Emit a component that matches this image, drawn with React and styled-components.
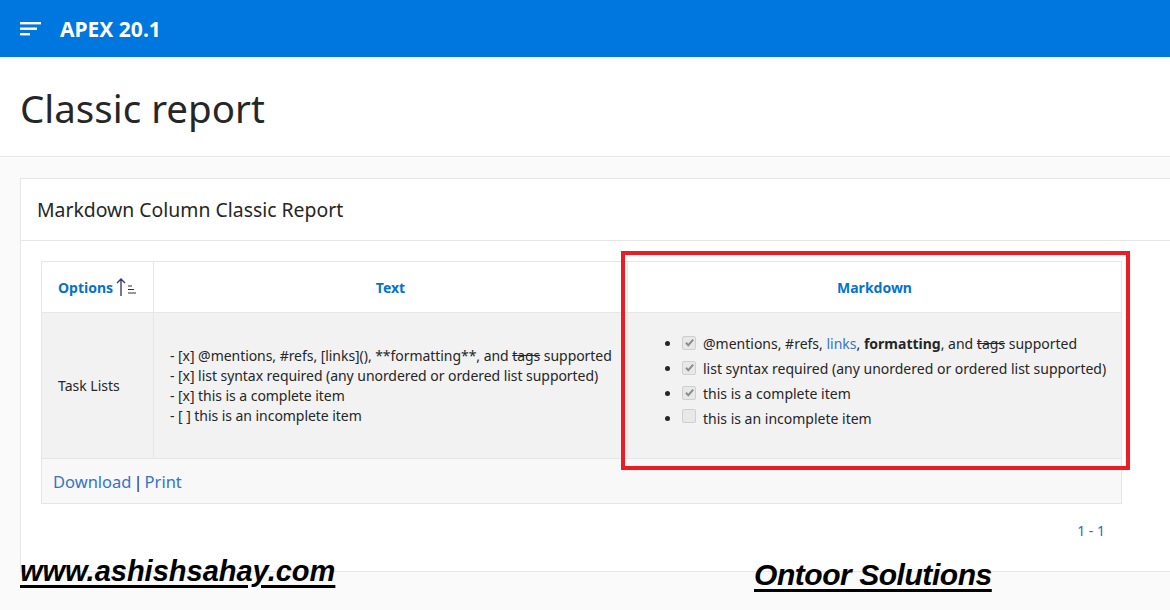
import styled, { createGlobalStyle } from "styled-components";

const GlobalStyle = createGlobalStyle`
  html, body {
    margin: 0;
    padding: 0;
    background: #fafafa;
    overflow: hidden;
  }
  body {
    font-family: "Noto Sans", "Open Sans", sans-serif;
    color: #262626;
  }
`;

const tasks = [
  { done: true, rich: true },
  { done: true, text: "list syntax required (any unordered or ordered list supported)" },
  { done: true, text: "this is a complete item" },
  { done: false, text: "this is an incomplete item" },
];

const rawLines = [
  <>- [x] @mentions, #refs, [links](), **formatting**, and <s>tags</s> supported</>,
  "- [x] list syntax required (any unordered or ordered list supported)",
  "- [x] this is a complete item",
  "- [ ] this is an incomplete item",
];

const MenuIcon = () => (
  <svg width="21" height="16" viewBox="0 0 21 16">
    <rect x="0" y="1" width="21" height="2.4" fill="#fff" />
    <rect x="0" y="6.5" width="17" height="2.4" fill="#fff" />
    <rect x="0" y="12" width="10" height="2.4" fill="#fff" />
  </svg>
);

const SortIcon = () => (
  <svg width="22" height="20" viewBox="0 0 22 20">
    <path d="M6 19V2M2 6l4-4 4 4" stroke="#3b3b6b" strokeWidth="1.4" fill="none" />
    <path d="M13 9h4M13 12.5h6M13 16h8" stroke="#333" strokeWidth="1.2" />
  </svg>
);

const Check = ({ on }) => (
  <CheckBox>
    {on && (
      <svg width="11" height="11" viewBox="0 0 11 11">
        <path d="M2 5.8l2.3 2.4L9.2 2.6" stroke="#8d8d8d" strokeWidth="2" fill="none" />
      </svg>
    )}
  </CheckBox>
);

const App = () => {
  return (
    <Page>
      <GlobalStyle />
      <TopBar>
        <MenuIcon />
        <AppName>APEX 20.1</AppName>
      </TopBar>
      <TitleBar>
        <PageTitle>Classic report</PageTitle>
      </TitleBar>
      <Body>
        <Card>
          <CardHeader>Markdown Column Classic Report</CardHeader>
          <CardBody>
            <Report>
              <colgroup>
                <col style={{ width: 112 }} />
                <col style={{ width: 474 }} />
                <col style={{ width: 494 }} />
              </colgroup>
              <thead>
                <tr>
                  <HeadCell>
                    <HeadInner>
                      Options <SortIcon />
                    </HeadInner>
                  </HeadCell>
                  <HeadCell>Text</HeadCell>
                  <HeadCell>Markdown</HeadCell>
                </tr>
              </thead>
              <tbody>
                <tr>
                  <DataCell>Task Lists</DataCell>
                  <DataCell>
                    {rawLines.map((l, i) => (
                      <RawLine key={i}>{l}</RawLine>
                    ))}
                  </DataCell>
                  <DataCell>
                    <TaskList>
                      {tasks.map((t, i) => (
                        <TaskItem key={i}>
                          <Check on={t.done} />
                          {t.rich ? (
                            <span>
                              @mentions, #refs, <InlineLink>links</InlineLink>,{" "}
                              <b>formatting</b>, and <s>tags</s> supported
                            </span>
                          ) : (
                            <span>{t.text}</span>
                          )}
                        </TaskItem>
                      ))}
                    </TaskList>
                  </DataCell>
                </tr>
                <tr>
                  <FooterCell colSpan={3}>
                    <FooterLink>Download</FooterLink>
                    <Divider>|</Divider>
                    <FooterLink>Print</FooterLink>
                  </FooterCell>
                </tr>
              </tbody>
            </Report>
            <Pagination>1 - 1</Pagination>
          </CardBody>
        </Card>
      </Body>
      <Highlight />
      <Watermark $left={20} $top={555} $size={29} $ls={0}>
        www.ashishsahay.com
      </Watermark>
      <Watermark $left={754} $top={558} $size={30} $ls={-0.45}>
        Ontoor Solutions
      </Watermark>
    </Page>
  );
};

const Page = styled.div`
  position: relative;
  width: 1170px;
  height: 610px;
  overflow: hidden;
  background: #fafafa;
`;

const TopBar = styled.header`
  height: 57px;
  background: #0076df;
  display: flex;
  align-items: center;
  gap: 19px;
  padding-left: 20px;
  box-sizing: border-box;
`;

const AppName = styled.span`
  color: #fff;
  font-size: 21px;
  font-weight: 700;
`;

const TitleBar = styled.div`
  height: 100px;
  background: #fff;
  border-bottom: 1px solid #e6e6e6;
  display: flex;
  align-items: center;
  padding-left: 20px;
  box-sizing: border-box;
`;

const PageTitle = styled.h1`
  margin: 0;
  font-size: 38.5px;
  font-weight: 400;
  color: #262626;
  padding-top: 3px;
`;

const Body = styled.main`
  padding: 21px 0 0 20px;
`;

const Card = styled.section`
  width: 1180px;
  height: 394px;
  background: #fff;
  border: 1px solid #e6e6e6;
  box-sizing: border-box;
`;

const CardHeader = styled.h2`
  margin: 0;
  height: 61px;
  display: flex;
  align-items: center;
  padding-left: 16px;
  font-size: 19.4px;
  font-weight: 400;
  color: #262626;
  border-bottom: 1px solid #e6e6e6;
`;

const CardBody = styled.div`
  padding: 20px 20px 0 20px;
  width: 1080px;
`;

const Report = styled.table`
  width: 1080px;
  table-layout: fixed;
  border-collapse: collapse;
  border: 1px solid #e6e6e6;
  font-size: 14px;
`;

const HeadCell = styled.th`
  height: 50px;
  padding: 0 10px;
  background: #fff;
  color: #0572ce;
  font-weight: 700;
  font-size: 14px;
  text-align: center;
  border: 1px solid #e6e6e6;
`;

const HeadInner = styled.span`
  display: inline-flex;
  align-items: center;
  gap: 2px;
`;

const DataCell = styled.td`
  height: 145px;
  padding: 0 16px;
  background: #f2f2f2;
  border: 1px solid #e6e6e6;
  vertical-align: middle;
  color: #262626;
`;

const RawLine = styled.div`
  line-height: 20px;
  white-space: nowrap;
  letter-spacing: -0.05px;
`;

const TaskList = styled.ul`
  margin: 0;
  padding: 0 0 9px 38px;
`;

const TaskItem = styled.li`
  line-height: 25px;
  white-space: nowrap;
  & > span:last-child {
    margin-left: 7px;
  }
`;

const CheckBox = styled.span`
  display: inline-flex;
  align-items: center;
  justify-content: center;
  width: 12px;
  height: 12px;
  border: 1px solid #cfcfcf;
  border-radius: 2px;
  background: #e8e8e8;
  vertical-align: 1px;
`;

const InlineLink = styled.span`
  color: #3873c8;
`;

const FooterCell = styled.td`
  height: 44px;
  padding: 0 11px;
  background: #f8f8f8;
  border: 1px solid #e6e6e6;
  font-size: 16.5px;
  color: #262b55;
`;

const FooterLink = styled.span`
  color: #3673c9;
`;

const Divider = styled.span`
  margin: 0 2px;
`;

const Pagination = styled.div`
  text-align: right;
  padding: 17px 16px 0 0;
  font-size: 14px;
  color: #2b6cb8;
`;

const Highlight = styled.div`
  position: absolute;
  left: 621px;
  top: 251px;
  width: 509px;
  height: 219px;
  border: 4px solid #ed1c24;
  box-sizing: border-box;
  pointer-events: none;
`;

const Watermark = styled.div`
  position: absolute;
  left: ${(p) => p.$left}px;
  top: ${(p) => p.$top}px;
  font-family: "Liberation Sans", Arial, sans-serif;
  font-size: ${(p) => p.$size}px;
  font-weight: 700;
  font-style: italic;
  color: #000;
  text-decoration: underline;
  text-decoration-thickness: 3px;
  text-underline-offset: 4px;
  letter-spacing: ${(p) => p.$ls}px;
`;

export default App;
